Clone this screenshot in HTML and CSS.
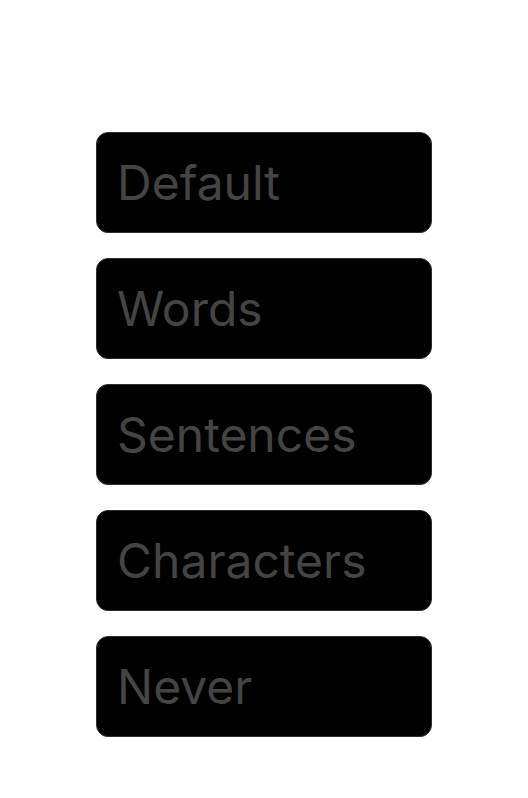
FILE: index.html
```html
<!DOCTYPE html>
<html>
<head>
<meta charset="utf-8">
<link rel="stylesheet" href="styles.css">
</head>
<body>
<div class="list">
  <div class="field">Default</div>
  <div class="field">Words</div>
  <div class="field">Sentences</div>
  <div class="field">Characters</div>
  <div class="field">Never</div>
</div>
</body>
</html>
```
FILE: styles.css
```css
html, body {
  margin: 0;
  background: #ffffff;
}
.list {
  display: flex;
  flex-direction: column;
  gap: 25px;
  padding: 132px 0 0 96px;
}
.field {
  box-sizing: border-box;
  width: 336px;
  height: 101px;
  background: #000000;
  border: 1px solid #2e2e2e;
  border-radius: 12px;
  display: flex;
  align-items: center;
  padding-left: 20px;
  font-family: Inter, "Noto Sans", sans-serif;
  font-size: 48px;
  color: #444444;
  line-height: 1;
}
```
